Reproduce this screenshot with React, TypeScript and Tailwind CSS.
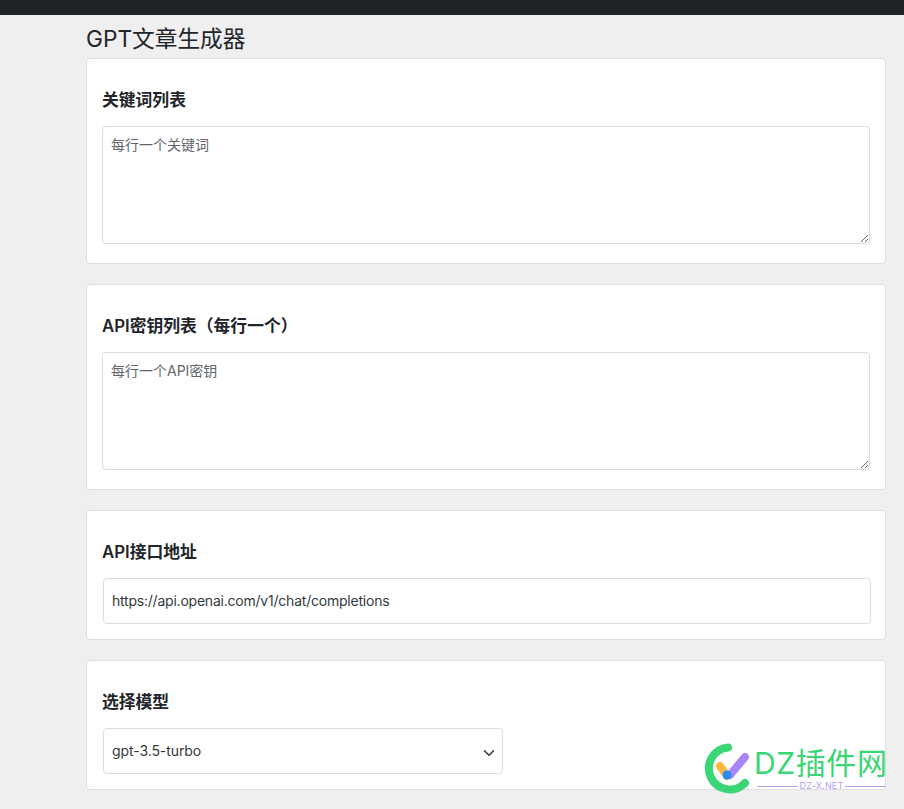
import { ChevronDown } from "lucide-react";

const font = { fontFamily: '"Inter", "Noto Sans CJK SC", sans-serif' };

function Card({ label, children, className }: { label: string; children: React.ReactNode; className: string }) {
  return (
    <div className={`bg-white border border-[#dfdfdf] rounded-[4px] px-[15px] ${className}`}>
      <label className="block h-[24px] mt-[29px] mb-[14px] text-[16.8px] leading-[24px] font-semibold text-[#212529]">
        {label}
      </label>
      {children}
    </div>
  );
}

function Watermark() {
  return (
    <div className="absolute left-[704px] top-[743px] w-[190px] h-[52px] pointer-events-none">
      <svg className="absolute left-0 top-0" width="54" height="52" viewBox="0 0 54 52" fill="none">
        <path d="M24 4.500 A21 21 0 1 0 41 40" stroke="#3ad574" strokeWidth="8" strokeLinecap="round" />
        <path d="M16 23 L23 33" stroke="#fdb73c" strokeWidth="8" strokeLinecap="round" />
        <path d="M26 32 L41 14" stroke="#a885f8" strokeWidth="8" strokeLinecap="round" />
        <circle cx="23" cy="32" r="4.500" fill="#2a8cf7" />
      </svg>
      <div className="absolute left-[50px] top-[4px] text-[30px] leading-[32px] text-[#3ad574] whitespace-nowrap tracking-[0.6px]">
        DZ插件网
      </div>
      <div className="absolute left-[53px] top-[37px] w-[129px] flex items-center gap-[2px]">
        <div className="h-px flex-1 bg-[#b79cf9]" />
        <span className="text-[9px] leading-[12px] text-[#b79cf9] tracking-[0.2px]">DZ-X.NET</span>
        <div className="h-px flex-1 bg-[#b79cf9]" />
      </div>
    </div>
  );
}

export default function App() {
  return (
    <div className="relative h-[809px] overflow-hidden bg-[#efefef] text-[#212529]" style={font}>
      <div className="h-[15px] bg-[#1f2429]" />
      <div className="w-[800px] ml-[86px]">
        <h1 className="h-[43px] pt-[9px] text-[22.7px] leading-[29px] font-normal text-[#212529]">GPT文章生成器</h1>

        <Card label="关键词列表" className="h-[206px] mb-[20px]">
          <textarea
            placeholder="每行一个关键词"
            className="block w-[768px] h-[118px] px-[8px] py-[6px] text-[14px] leading-[24px] border border-[#dcdcdc] rounded-[4px] bg-white placeholder:text-[#5f666d] outline-none"
          />
        </Card>

        <Card label="API密钥列表（每行一个）" className="h-[206px] mb-[20px]">
          <textarea
            placeholder="每行一个API密钥"
            className="block w-[768px] h-[118px] px-[8px] py-[6px] text-[14px] leading-[24px] border border-[#dcdcdc] rounded-[4px] bg-white placeholder:text-[#5f666d] outline-none"
          />
        </Card>

        <Card label="API接口地址" className="h-[130px] mb-[20px]">
          <input
            readOnly
            value="https://api.openai.com/v1/chat/completions"
            className="block w-[768px] h-[46px] ml-px px-[8px] pb-[1px] text-[14px] tracking-[-0.22px] text-[#343a40] border border-[#dcdcdc] rounded-[4px] bg-white outline-none"
          />
        </Card>

        <Card label="选择模型" className="h-[130px]">
          <div className="flex items-center justify-between w-[400px] h-[46px] ml-px pl-[8px] pr-[4px] text-[14px] tracking-[-0.08px] text-[#343a40] border border-[#dcdcdc] rounded-[4px] bg-white">
            <span className="pb-[1px]">gpt-3.5-turbo</span>
            <ChevronDown className="w-[18px] h-[18px] mt-[3px] text-[#343a40]" strokeWidth={2} />
          </div>
        </Card>
      </div>
      <Watermark />
    </div>
  );
}
